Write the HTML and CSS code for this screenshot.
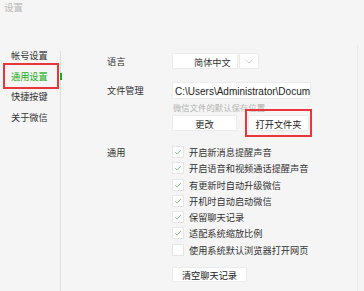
FILE: index.html
```html
<!DOCTYPE html>
<html lang="zh-CN">
<head>
<meta charset="utf-8">
<title>设置</title>
<link rel="stylesheet" href="styles.css">
</head>
<body>
<div class="title">设置</div>
<div class="main">
  <nav class="sidebar">
    <div class="nav-item">帐号设置</div>
    <div class="nav-item active">通用设置</div>
    <div class="nav-item">快捷按键</div>
    <div class="nav-item">关于微信</div>
  </nav>
  <section class="content">
    <div class="row row-lang">
      <div class="label">语言</div>
      <div class="select">
        <div class="select-value">简体中文</div>
        <div class="select-arrow"><svg width="8" height="5" viewBox="0 0 8 5"><path d="M0.5 0.5 L4 4 L7.5 0.5" fill="none" stroke="#c8c8c8" stroke-width="0.9"/></svg></div>
      </div>
    </div>
    <div class="row row-file">
      <div class="label">文件管理</div>
      <div class="field">
        <div class="path">C:\Users\Administrator\Docum</div>
        <div class="hint">微信文件的默认保存位置</div>
        <div class="buttons">
          <div class="btn btn-change">更改</div>
          <div class="btn btn-open">打开文件夹</div>
        </div>
      </div>
    </div>
    <div class="row row-general">
      <div class="label">通用</div>
      <div class="checks">
        <div class="check"><span class="box on"><svg width="12" height="12" viewBox="0 0 12 12"><path d="M2.6 6.2 L5 8.4 L9.6 3.6" fill="none" stroke="#62bd62" stroke-width="1"/></svg></span>开启新消息提醒声音</div>
        <div class="check"><span class="box on"><svg width="12" height="12" viewBox="0 0 12 12"><path d="M2.6 6.2 L5 8.4 L9.6 3.6" fill="none" stroke="#62bd62" stroke-width="1"/></svg></span>开启语音和视频通话提醒声音</div>
        <div class="check"><span class="box on"><svg width="12" height="12" viewBox="0 0 12 12"><path d="M2.6 6.2 L5 8.4 L9.6 3.6" fill="none" stroke="#62bd62" stroke-width="1"/></svg></span>有更新时自动升级微信</div>
        <div class="check"><span class="box on"><svg width="12" height="12" viewBox="0 0 12 12"><path d="M2.6 6.2 L5 8.4 L9.6 3.6" fill="none" stroke="#62bd62" stroke-width="1"/></svg></span>开机时自动启动微信</div>
        <div class="check"><span class="box on"><svg width="12" height="12" viewBox="0 0 12 12"><path d="M2.6 6.2 L5 8.4 L9.6 3.6" fill="none" stroke="#62bd62" stroke-width="1"/></svg></span>保留聊天记录</div>
        <div class="check"><span class="box on"><svg width="12" height="12" viewBox="0 0 12 12"><path d="M2.6 6.2 L5 8.4 L9.6 3.6" fill="none" stroke="#62bd62" stroke-width="1"/></svg></span>适配系统缩放比例</div>
        <div class="check"><span class="box"></span>使用系统默认浏览器打开网页</div>
        <div class="btn btn-clear">清空聊天记录</div>
      </div>
    </div>
  </section>
</div>
</body>
</html>
```
FILE: styles.css
```css
html, body {
  margin: 0;
  padding: 0;
}
body {
  width: 364px;
  height: 291px;
  overflow: hidden;
  background: #f5f5f5;
  font-family: "Noto Sans CJK SC", "Microsoft YaHei", sans-serif;
  font-size: 9.2px;
  color: #333;
}
.title {
  height: 14px;
  line-height: 14px;
  padding-left: 4px;
  font-size: 9.5px;
  color: #b8b8b8;
}
.main {
  margin-top: 31px;
  height: 246px;
  display: flex;
}
.sidebar {
  width: 61px;
  flex: none;
  position: relative;
}
.sidebar::after {
  content: "";
  position: absolute;
  top: 6px;
  bottom: 0;
  right: 0;
  width: 1px;
  background: #dedede;
}
.nav-item {
  height: 20.67px;
  line-height: 20.67px;
  padding-left: 11px;
  color: #333;
  position: relative;
}
.nav-item.active {
  color: #1aad19;
}
.nav-item.active::before {
  content: "";
  position: absolute;
  left: 3px;
  top: -2.7px;
  width: 52px;
  height: 22px;
  border: 2px solid #e8363b;
}
.nav-item.active::after {
  content: "";
  position: absolute;
  left: 60px;
  top: 7px;
  width: 2px;
  height: 7px;
  background: #1aad19;
  z-index: 1;
}
.content {
  flex: 1;
  padding-left: 46px;
  padding-top: 8px;
  border-right: 1px solid #e9e9e9;
  margin-right: 6px;
}
.row {
  display: flex;
}
.label {
  width: 65px;
  flex: none;
}
.row-lang .label {
  line-height: 16px;
}
.select {
  display: flex;
  gap: 1px;
  height: 16px;
}
.select-value {
  width: 66px;
  height: 16px;
  line-height: 16px;
  box-sizing: border-box;
  padding-left: 21px;
  background: #fff;
  border: 1px solid #ececec;
}
.select-arrow {
  width: 20px;
  height: 16px;
  box-sizing: border-box;
  background: #fff;
  border: 1px solid #ececec;
  display: flex;
  align-items: center;
  justify-content: center;
}
.row-file {
  margin-top: 13px;
}
.row-file .label {
  line-height: 17px;
}
.field {
  display: flex;
  flex-direction: column;
}
.path {
  width: 139px;
  height: 17px;
  line-height: 17px;
  box-sizing: border-box;
  padding-left: 2px;
  background: #fff;
  border: 1px solid #ececec;
  white-space: nowrap;
  overflow: hidden;
  font-family: "Liberation Sans", Arial, sans-serif;
  font-size: 10px;
  color: #222;
}
.hint {
  height: 16px;
  line-height: 16px;
  padding-left: 1px;
  font-size: 8.4px;
  color: #b3b3b3;
}
.buttons {
  display: flex;
  gap: 11px;
}
.btn {
  height: 16px;
  line-height: 16px;
  box-sizing: border-box;
  background: #fff;
  border: 1px solid #ececec;
  text-align: center;
  color: #222;
}
.btn-change {
  width: 65px;
}
.btn-open {
  width: 61px;
  position: relative;
}
.btn-open::after {
  content: "";
  position: absolute;
  left: -4px;
  right: -4px;
  top: -7px;
  bottom: -7px;
  border: 2px solid #e8363b;
}
.row-general {
  margin-top: 12.8px;
}
.row-general .label {
  line-height: 16.3px;
}
.checks {
  display: flex;
  flex-direction: column;
}
.check {
  height: 16.3px;
  display: flex;
  align-items: center;
  white-space: nowrap;
}
.box {
  width: 12px;
  height: 12px;
  box-sizing: border-box;
  background: #fff;
  border: 1px solid #e6e6e6;
  margin-right: 5px;
  display: flex;
  align-items: center;
  justify-content: center;
  flex: none;
}
.box svg {
  display: block;
}
.btn-clear {
  margin-top: 9px;
  width: 75px;
  height: 15px;
  line-height: 14px;
}
```
